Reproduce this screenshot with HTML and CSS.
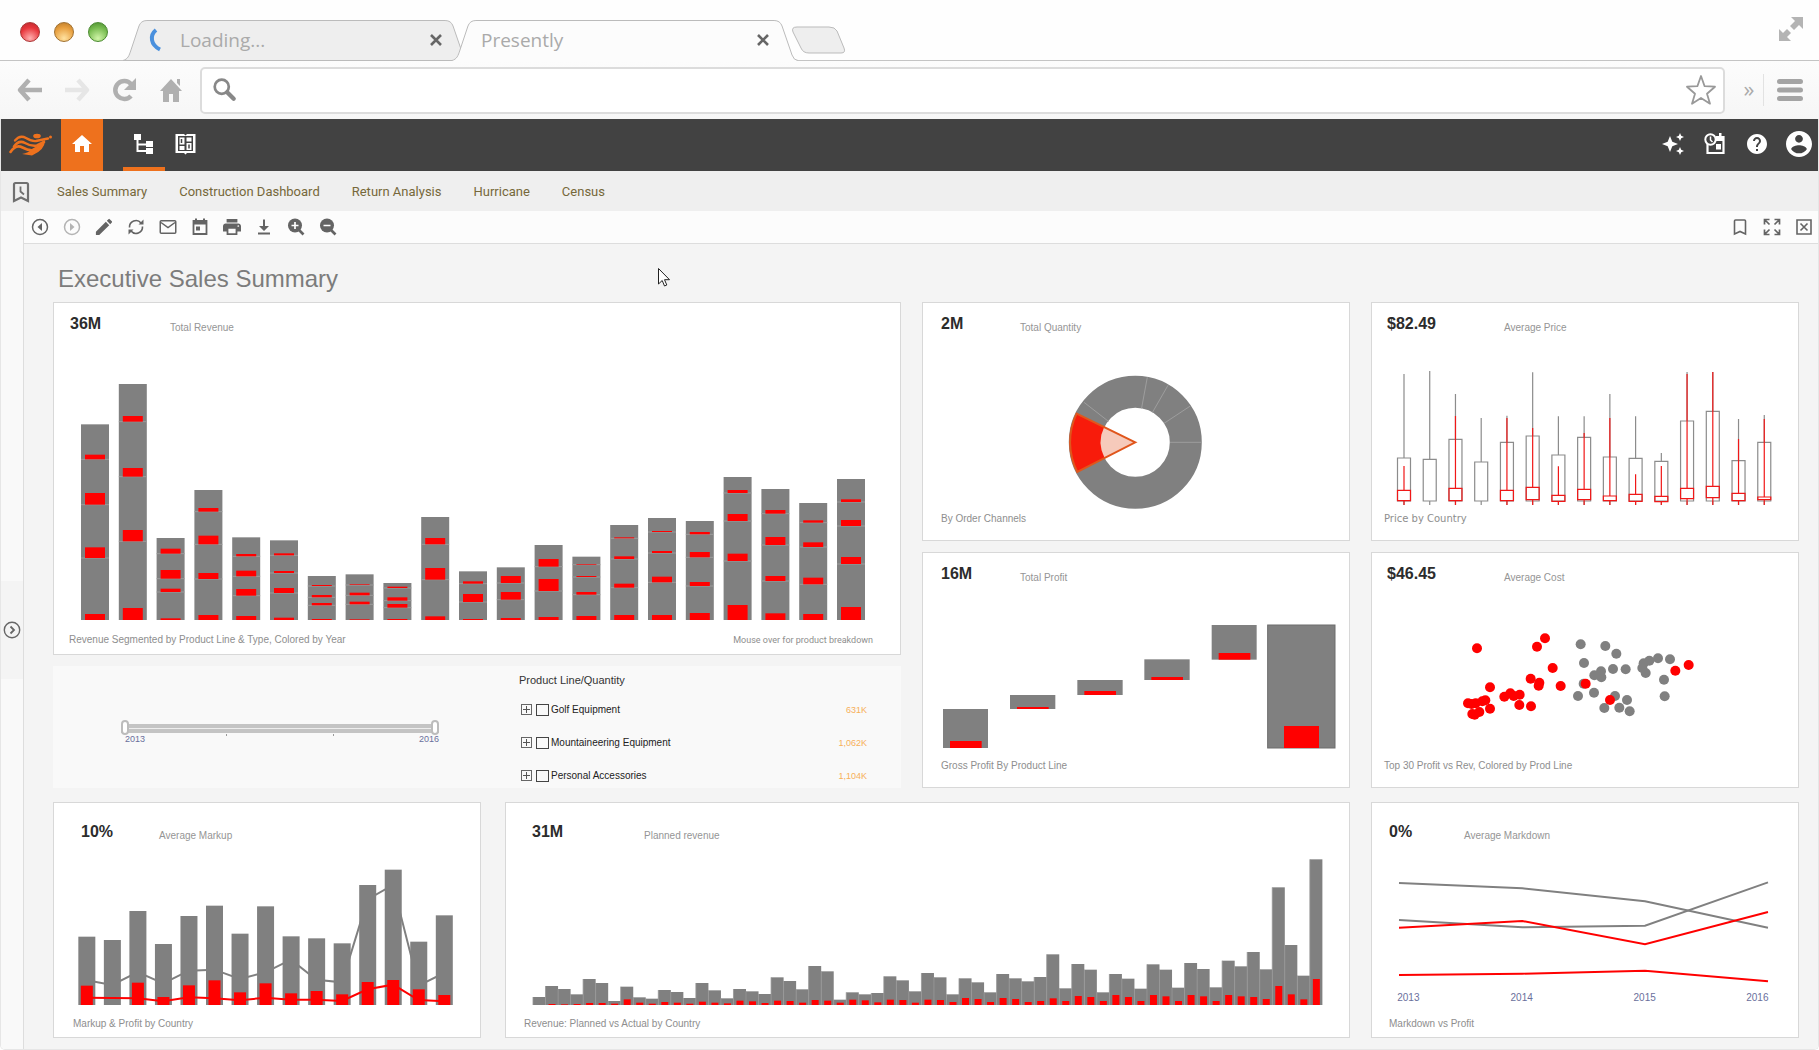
FILE: index.html
```html
<!DOCTYPE html>
<html lang="en">
<head>
<meta charset="utf-8">
<title>Executive Sales Summary</title>
<link rel="stylesheet" href="styles.css">
</head>
<body>
<header class="browser">
  <div class="titlebar">
    <div class="lights">
      <button class="light light-red" aria-label="Close window"></button>
      <button class="light light-amber" aria-label="Minimise window"></button>
      <button class="light light-green" aria-label="Zoom window"></button>
    </div>
    <div class="tab">
      <svg class="tab-shape" viewBox="0 0 347 41" preserveAspectRatio="none" aria-hidden="true"><path d="M0 40.5C5 39 6 36 8 30L16 6Q18 .5 24 .5H323Q329 .5 331 6L341 35Q343 40.5 347 40.5Z" fill="#eee" stroke="#bbb"/></svg>
      <svg class="spinner" viewBox="0 0 20 24" aria-hidden="true"><path d="M8 2Q3 6 4 12Q5 18 12 21.500" fill="none" stroke="#4a90dd" stroke-width="4"/></svg>
      <span class="tab-title">Loading...</span>
      <button class="tab-close" aria-label="Close tab"><svg viewBox="0 0 14 14"><path d="M2 2l10 10M12 2L2 12" stroke="#666" stroke-width="2.6"/></svg></button>
    </div>
    <div class="tab tab-active">
      <svg class="tab-shape" viewBox="0 0 347 41" preserveAspectRatio="none" aria-hidden="true"><path d="M0 40.5C5 39 6 36 8 30L16 6Q18 .5 24 .5H323Q329 .5 331 6L341 35Q343 40.5 347 40.5V41H0Z" fill="#fcfcfc"/><path d="M0 40.5C5 39 6 36 8 30L16 6Q18 .5 24 .5H323Q329 .5 331 6L341 35Q343 40.5 347 40.5" fill="none" stroke="#bbb"/></svg>
      <span class="tab-title">Presently</span>
      <button class="tab-close" aria-label="Close tab"><svg viewBox="0 0 14 14"><path d="M2 2l10 10M12 2L2 12" stroke="#666" stroke-width="2.6"/></svg></button>
    </div>
    <button class="new-tab" aria-label="New tab"><svg viewBox="0 0 56 28"><path d="M6 1H38Q44 1 46 5L53 22Q55 27 50 27H18Q12 27 10 22L2 6Q0 1 6 1Z" fill="#eee" stroke="#bbb"/></svg></button>
    <button class="expand" aria-label="Full screen"><svg viewBox="0 0 26 26"><path d="M13 1h12v12l-4-4-5 5-4-4 5-5zM13 25H1V13l4 4 4-4 4 4-4 4z" fill="#b4b4b4"/></svg></button>
  </div>
  <div class="navbar">
    <div class="nav-buttons">
      <button aria-label="Back"><svg viewBox="0 0 28 28"><path d="M13 4L4 14l9 10M5 14h21" fill="none" stroke="#b0b0b0" stroke-width="4.500" stroke-linejoin="round"/></svg></button>
      <button aria-label="Forward"><svg viewBox="0 0 28 28"><path d="M15 4l9 10-9 10M23 14H2" fill="none" stroke="#e6e6e6" stroke-width="4.500" stroke-linejoin="round"/></svg></button>
      <button aria-label="Reload"><svg viewBox="0 0 28 28"><path d="M21 20a9 9 0 1 1 0-12" fill="none" stroke="#b0b0b0" stroke-width="4.500"/><path d="M26 2v12H14z" fill="#b0b0b0"/></svg></button>
      <button aria-label="Home"><svg viewBox="0 0 28 28"><path d="M14 3l11 12h-3v11h-6v-8h-4v8H6V15H3zM20 3h3v7l-3-3z" fill="#b0b0b0"/></svg></button>
    </div>
    <form class="omnibox">
      <svg class="search-icon" viewBox="0 0 24 24" aria-hidden="true"><circle cx="9" cy="9" r="6.500" fill="none" stroke="#888" stroke-width="2.500"/><path d="M14 14l6 6" stroke="#888" stroke-width="4" stroke-linecap="round"/></svg>
      <input type="text" aria-label="Address">
      <button class="star" type="button" aria-label="Bookmark"><svg viewBox="0 0 32 32"><path d="M16 2l3.600 10.200 10.400.500-8 7 3 10-9-5.700-9 5.700 3-10-8-7 10.400-.500z" fill="#fff" stroke="#999" stroke-width="1.800" stroke-linejoin="round"/></svg></button>
    </form>
    <button class="more" aria-label="More">»</button>
    <button class="menu" aria-label="Menu"><svg viewBox="0 0 26 24"><path d="M2.500 3.500h21M2.500 12h21M2.500 20.500h21" stroke="#a4a4a4" stroke-width="5" stroke-linecap="round"/></svg></button>
  </div>
</header>

<div class="app">
  <nav class="topbar" aria-label="Main">
    <a class="logo" href="#" aria-label="Portal"><svg viewBox="0 0 44 24"><g fill="none" stroke="#ee711d" stroke-linecap="round"><path d="M6 7.500Q11 1.500 17 5T27 8L39 5.500" stroke-width="2.300"/><path d="M5 13.500Q10 6.500 16 10T28 12.500L35 9" stroke-width="2.600"/><path d="M1.500 19Q7 11 13.500 14.500T25 17" stroke-width="2.600"/></g><path d="M33 9L36 7Q36 17 23 22.500Q18 21.500 13 21Q20 19.500 22 16.500L29 12.500Z" fill="#ee711d"/><ellipse cx="28" cy="3" rx="3.800" ry="2.300" fill="#ee711d"/><circle cx="41.500" cy="4" r="1.500" fill="#ee711d"/></svg></a>
    <a class="top-item top-home" href="#" aria-label="Home"><svg viewBox="0 0 24 24"><path d="M10 20v-6h4v6h5v-8h3L12 3 2 12h3v8z" fill="#fff"/></svg></a>
    <a class="top-item top-current" href="#" aria-label="Repository"><svg viewBox="0 0 24 24"><path d="M2 2h7v6H6.500v3.500H14V9h7v6h-7v-1.500H6.500V18H14v-2h7v6h-7v-2H4.500V8H2z" fill="#fff"/></svg></a>
    <a class="top-item" href="#" aria-label="Catalogue"><svg viewBox="0 0 24 24"><path d="M1.500 2h8.500l1.500 1.500L13 2h8.500v19H13l-1.500 1.500L10 21H1.500z" fill="#fff"/><path d="M4 4h15v15H4z" fill="#424242"/><path d="M5.500 5.500h5v7h-5zM5.500 14h5v4h-5zM12.500 5.500h5v4h-5zM12.500 11h5v7h-5z" fill="#fff"/><path d="M7.500 7v4M15 12.500v4" stroke="#424242" stroke-width="1.500"/></svg></a>
    <span class="spacer"></span>
    <button class="top-item" aria-label="Assistant"><svg viewBox="0 0 24 24"><path d="M9 4l2.300 5.700L17 12l-5.700 2.300L9 20l-2.300-5.700L1 12l5.700-2.300zM19 1l1.200 2.800L23 5l-2.800 1.200L19 9l-1.200-2.800L15 5l2.800-1.200zM19 15l1.200 2.800L23 19l-2.800 1.200L19 23l-1.200-2.800L15 19l2.800-1.200z" fill="#fff"/></svg></button>
    <button class="top-item" aria-label="Schedule"><svg viewBox="0 0 24 24"><path d="M4.500 12v9h16V5h-7" fill="none" stroke="#fff" stroke-width="2.200"/><path d="M13 4h8v5h-8zM16 1h2.500v4H16zM13 12h5v5.500h-5z" fill="#fff"/><circle cx="7.500" cy="7.500" r="5.200" fill="#424242" stroke="#fff" stroke-width="2"/><path d="M7.500 4.500v3.500l2 2" fill="none" stroke="#fff" stroke-width="1.500"/></svg></button>
    <button class="top-item" aria-label="Help"><svg viewBox="0 0 24 24"><path d="M12 2C6.480 2 2 6.480 2 12s4.480 10 10 10 10-4.480 10-10S17.520 2 12 2zm1 17h-2v-2h2v2zm2.070-7.750l-.9.920C13.450 12.900 13 13.500 13 15h-2v-.5c0-1.100.45-2.100 1.170-2.830l1.240-1.260c.37-.36.59-.86.59-1.410 0-1.100-.9-2-2-2s-2 .9-2 2H8c0-2.210 1.790-4 4-4s4 1.790 4 4c0 .88-.36 1.680-.93 2.250z" fill="#fff"/></svg></button>
    <button class="top-item top-user" aria-label="Account"><svg viewBox="2 2 20 20"><path d="M12 2C6.480 2 2 6.480 2 12s4.480 10 10 10 10-4.480 10-10S17.520 2 12 2zm0 3c1.660 0 3 1.340 3 3s-1.340 3-3 3-3-1.340-3-3 1.340-3 3-3zm0 14.200c-2.500 0-4.710-1.280-6-3.220.03-1.990 4-3.080 6-3.080 1.990 0 5.970 1.090 6 3.080-1.290 1.940-3.500 3.220-6 3.220z" fill="#fff"/></svg></button>
  </nav>

  <nav class="bookmarks" aria-label="Dashboards">
    <svg class="history-icon" viewBox="0 0 18 22" aria-hidden="true"><path d="M2 20V3.500Q2 2 3.500 2h11Q16 2 16 3.500V20l-7-3.500z" fill="none" stroke="#707070" stroke-width="2.200"/><path d="M8.500 5.500v5l3.500 3" fill="none" stroke="#707070" stroke-width="1.800"/></svg>
    <a href="#">Sales Summary</a>
    <a href="#">Construction Dashboard</a>
    <a href="#">Return Analysis</a>
    <a href="#">Hurricane</a>
    <a href="#">Census</a>
  </nav>

  <div class="workspace">
    <aside class="rail">
      <button class="rail-toggle" aria-label="Open panel"><svg viewBox="0 0 18 18"><circle cx="9" cy="9" r="7.700" fill="none" stroke="#666" stroke-width="1.400"/><path d="M7.500 5.500L11 9l-3.500 3.500" fill="none" stroke="#666" stroke-width="1.800"/></svg></button>
    </aside>
    <main class="main">
      <div class="toolbar">
        <button aria-label="Previous"><svg viewBox="0 0 18 18"><circle cx="9" cy="9" r="7.500" fill="none" stroke="#646464" stroke-width="1.500"/><path d="M11 5v8L6.500 9z" fill="#646464"/></svg></button>
        <button aria-label="Next" disabled><svg viewBox="0 0 18 18"><circle cx="9" cy="9" r="7.500" fill="none" stroke="#b4b4b4" stroke-width="1.500"/><path d="M7 5v8l4.500-4z" fill="#b4b4b4"/></svg></button>
        <button aria-label="Edit"><svg viewBox="2 2 20 20"><path d="M3 17.250V21h3.750L17.810 9.940l-3.750-3.750L3 17.250zM20.710 7.040a1 1 0 0 0 0-1.410l-2.340-2.340a1 1 0 0 0-1.410 0l-1.830 1.830 3.750 3.750 1.830-1.830z" fill="#646464"/></svg></button>
        <button aria-label="Refresh"><svg viewBox="0 0 18 18"><path d="M2.500 9.500A6.500 6.500 0 0 1 14 5M15.500 8.500A6.500 6.500 0 0 1 4 13" fill="none" stroke="#646464" stroke-width="1.600"/><path d="M16.500 1.500v5h-5zM1.500 16.500v-5h5z" fill="#646464"/></svg></button>
        <button aria-label="Email"><svg viewBox="0 0 18 18"><rect x="1.250" y="2.750" width="15.500" height="12.500" rx="1" fill="none" stroke="#646464" stroke-width="1.500"/><path d="M2 4.500l7 5 7-5" fill="none" stroke="#646464" stroke-width="1.500"/></svg></button>
        <button aria-label="Schedule"><svg viewBox="0 0 18 18"><path d="M2.500 3h13v13h-13z" fill="none" stroke="#646464" stroke-width="1.800"/><path d="M2 2.500h14v4H2zM4 .5h2v3H4zM12 .5h2v3h-2zM5 8.500h4v4H5z" fill="#646464"/></svg></button>
        <button aria-label="Print"><svg viewBox="2 2 20 20"><path d="M19 8H5c-1.660 0-3 1.340-3 3v6h4v4h12v-4h4v-6c0-1.660-1.340-3-3-3zm-3 11H8v-5h8v5zm3-7c-.55 0-1-.45-1-1s.45-1 1-1 1 .45 1 1-.45 1-1 1zm-1-9H6v4h12V3z" fill="#646464"/></svg></button>
        <button aria-label="Export"><svg viewBox="0 0 18 18"><path d="M8 1.500h2V8h4l-5 5-5-5h4zM3 14.500h12v2H3z" fill="#646464"/></svg></button>
        <button aria-label="Zoom in"><svg viewBox="0 0 18 18"><circle cx="8" cy="7.500" r="7" fill="#646464"/><path d="M12 12l4.500 4.500" stroke="#646464" stroke-width="2.600"/><path d="M8 4v7M4.500 7.500h7" stroke="#fff" stroke-width="1.700"/></svg></button>
        <button aria-label="Zoom out"><svg viewBox="0 0 18 18"><circle cx="8" cy="7.500" r="7" fill="#646464"/><path d="M12 12l4.500 4.500" stroke="#646464" stroke-width="2.600"/><path d="M4.500 7.500h7" stroke="#fff" stroke-width="1.700"/></svg></button>
        <span class="spacer"></span>
        <button aria-label="Add bookmark"><svg viewBox="0 0 18 18"><path d="M3.500 16V3Q3.500 2 4.500 2h9Q14.500 2 14.500 3V16L9 13.500z" fill="none" stroke="#646464" stroke-width="1.600"/></svg></button>
        <button aria-label="Maximise"><svg viewBox="0 0 18 18"><path d="M1.500 6.500v-5h5M11.500 1.500h5v5M16.500 11.500v5h-5M6.500 16.500h-5v-5M2 2l4.500 4.500M16 2l-4.500 4.500M16 16l-4.500-4.500M2 16l4.500-4.500" fill="none" stroke="#646464" stroke-width="1.700"/></svg></button>
        <button aria-label="Close dashboard"><svg viewBox="0 0 18 18"><path d="M2 2h14v14H2zM5.500 5.500l7 7M12.500 5.500l-7 7" fill="none" stroke="#646464" stroke-width="1.600"/></svg></button>
      </div>

      <div class="board">
        <h1>Executive Sales Summary</h1>
        <svg class="pointer" viewBox="0 0 12 19" aria-hidden="true"><path d="M.5.500V16l3.700-3.500L6.500 18l2.300-1-2.300-5.300h5z" fill="#fff" stroke="#222"/></svg>

        <div class="upper">
          <div class="stack">
            <section class="card card-revenue">
              <div class="kpi"><strong>36M</strong><span>Total Revenue</span></div>
              <svg id="revenue" viewBox="0 0 846 297" role="img" aria-label="Revenue by product line and type"></svg>
              <p class="caption"><span>Revenue Segmented by Product Line &amp; Type, Colored by Year</span><span class="hint">Mouse over for product breakdown</span></p>
            </section>
            <section class="filters">
              <div class="years">
                <div class="range">
                  <input type="range" min="2013" max="2016" value="2013" aria-label="From year">
                  <input type="range" min="2013" max="2016" value="2016" aria-label="To year">
                </div>
                <div class="ticks"><i></i><i></i></div>
                <div class="range-labels"><span>2013</span><span>2016</span></div>
              </div>
              <div class="tree">
                <h2>Product Line/Quantity</h2>
                <ul>
                  <li><button class="twisty" aria-label="Expand Golf Equipment"></button><input type="checkbox" id="golf"><label for="golf">Golf Equipment</label><span class="qty">631K</span></li>
                  <li><button class="twisty" aria-label="Expand Mountaineering Equipment"></button><input type="checkbox" id="mountain"><label for="mountain">Mountaineering Equipment</label><span class="qty">1,062K</span></li>
                  <li><button class="twisty" aria-label="Expand Personal Accessories"></button><input type="checkbox" id="personal"><label for="personal">Personal Accessories</label><span class="qty">1,104K</span></li>
                </ul>
              </div>
            </section>
          </div>
          <div class="stack">
            <section class="card card-total">
              <div class="kpi"><strong>2M</strong><span>Total Quantity</span></div>
              <svg id="channels" viewBox="0 0 426 176" role="img" aria-label="Quantity by order channel"></svg>
              <p class="caption">By Order Channels</p>
            </section>
            <section class="card card-total">
              <div class="kpi"><strong>16M</strong><span>Total Profit</span></div>
              <svg id="profit" viewBox="0 0 426 173" role="img" aria-label="Gross profit by product line"></svg>
              <p class="caption">Gross Profit By Product Line</p>
            </section>
          </div>
          <div class="stack">
            <section class="card card-average">
              <div class="kpi"><strong>$82.49</strong><span>Average Price</span></div>
              <svg id="price" viewBox="0 0 426 176" role="img" aria-label="Price by country"></svg>
              <p class="caption caption-wide">Price by Country</p>
            </section>
            <section class="card card-average">
              <div class="kpi"><strong>$46.45</strong><span>Average Cost</span></div>
              <svg id="cost" viewBox="0 0 426 173" role="img" aria-label="Profit against revenue"></svg>
              <p class="caption">Top 30 Profit vs Rev, Colored by Prod Line</p>
            </section>
          </div>
        </div>

        <div class="lower">
          <div class="pair">
            <section class="card card-low card-markup">
              <div class="kpi"><strong>10%</strong><span>Average Markup</span></div>
              <svg id="markup" viewBox="0 0 426 173" role="img" aria-label="Markup and profit by country"></svg>
              <p class="caption">Markup &amp; Profit by Country</p>
            </section>
            <section class="card card-low card-planned">
              <div class="kpi"><strong>31M</strong><span>Planned revenue</span></div>
              <svg id="planned" viewBox="0 0 843 173" role="img" aria-label="Planned and actual revenue by country"></svg>
              <p class="caption">Revenue: Planned vs Actual by Country</p>
            </section>
          </div>
          <section class="card card-low card-markdown">
            <div class="kpi"><strong>0%</strong><span>Average Markdown</span></div>
            <svg id="markdown" viewBox="0 0 426 173" role="img" aria-label="Markdown and profit by year"></svg>
            <p class="caption">Markdown vs Profit</p>
          </section>
        </div>
      </div>
    </main>
  </div>
</div>
<script src="charts.js"></script>
</body>
</html>
```
FILE: styles.css
```css
* { box-sizing: border-box; }
body {
  margin: 0;
  min-height: 100vh;
  display: flex;
  flex-direction: column;
  background: #fff;
  font-family: "Liberation Sans", Arial, sans-serif;
}
button { padding: 0; border: 0; background: none; display: grid; place-items: center; flex: none; }
svg { display: block; }
h1, h2, p, ul { margin: 0; padding: 0; font-weight: normal; }
.spacer { flex: 1; }

/* Browser window */
.titlebar {
  display: flex;
  align-items: flex-end;
  height: 61px;
  border-bottom: 1px solid #c4c4c4;
  background: #fefefe;
}
.lights { display: flex; gap: 14px; padding: 0 15px 18px 20px; }
.light { width: 20px; height: 20px; border-radius: 50%; border: 1px solid #888; }
.light-red { border-color: #a33; background: radial-gradient(circle at 50% 85%, #ffb0b0, #e8363c 60%, #b8282e); }
.light-amber { border-color: #a07030; background: radial-gradient(circle at 50% 85%, #ffe2a0, #e8a040 60%, #b87828); }
.light-green { border-color: #4a8a30; background: radial-gradient(circle at 50% 85%, #d0f5a8, #78bc50 60%, #4a8a30); }
.tab {
  position: relative;
  display: flex;
  align-items: center;
  width: 346px;
  height: 41px;
  margin-bottom: -1px;
  padding: 0 26px 2px 25px;
}
.tab-active { margin-left: -17px; padding-left: 29px; padding-right: 28px; }
.tab-shape { position: absolute; inset: 0; width: 100%; height: 100%; }
.spinner { position: relative; width: 20px; height: 24px; margin-right: 12px; }
.tab-title { position: relative; flex: 1; font: 19px/24px "Open Sans", sans-serif; color: #aaa; }
.tab-close { position: relative; width: 14px; height: 14px; }
.tab-close svg { width: 14px; height: 14px; }
.new-tab { margin: 0 0 6px -7px; }
.new-tab svg { width: 56px; height: 28px; }
.expand { margin: 0 15px 18px auto; }
.expand svg { width: 26px; height: 26px; }

.navbar {
  display: flex;
  align-items: center;
  height: 58px;
  padding: 0 16px;
  background: linear-gradient(#fcfcfc, #f6f6f6);
}
.nav-buttons { display: flex; gap: 19px; width: 184px; }
.nav-buttons svg { width: 28px; height: 28px; }
.omnibox {
  flex: 1;
  display: flex;
  align-items: center;
  height: 47px;
  padding: 0 6px 0 10px;
  border: 2px solid #dcdcdc;
  border-radius: 5px;
  background: #fff;
}
.search-icon { width: 26px; height: 26px; }
.omnibox input { flex: 1; min-width: 0; border: 0; background: none; font-size: 18px; }
.star svg { width: 32px; height: 32px; }
.more { width: 39px; height: 32px; padding: 0 0 4px 10px; border-right: 1px solid #e2e2e2; color: #aaa; font: 22px/24px "Open Sans", sans-serif; }
.menu { margin-left: 13px; }
.menu svg { width: 26px; height: 24px; }

/* Application frame */
.app {
  flex: 1;
  display: flex;
  flex-direction: column;
  border: 1px solid #e6e6e6;
  border-top: 0;
  border-radius: 0 0 5px 5px;
  overflow: hidden;
}
.topbar { display: flex; height: 52px; background: #424242; }
.logo { width: 60px; padding: 14px 8px; }
.logo svg { width: 44px; height: 24px; }
.top-item { display: grid; place-items: center; width: 42px; height: 52px; padding-bottom: 2px; }
.top-item svg { width: 24px; height: 24px; }
.top-home { margin-right: 20px; background: #ee711d; }
.top-current { border-bottom: 4px solid #ee711d; padding: 4px 0 2px; }
.top-user { width: 40px; padding-left: 2px; }
.top-user svg { width: 26px; height: 26px; }

.bookmarks {
  display: flex;
  align-items: center;
  gap: 32px;
  height: 40px;
  padding: 1px 11px 0;
  background: #efefef;
}
.bookmarks a { font: 13px/20px Roboto, sans-serif; color: #76683a; text-decoration: none; }
.history-icon { width: 18px; height: 22px; margin-right: -5px; }

.workspace { flex: 1; display: flex; }
.rail { display: flex; align-items: center; width: 23px; background: #f9f9f9; border-right: 1px solid #ddd; }
.rail-toggle { width: 22px; height: 98px; background: #f4f4f4; }
.rail-toggle svg { width: 18px; height: 18px; }
.main { flex: 1; min-width: 0; display: flex; flex-direction: column; background: #f4f4f4; }
.toolbar {
  display: flex;
  align-items: center;
  gap: 14px;
  height: 33px;
  padding: 0 5px 0 7px;
  background: #fcfcfc;
  border-bottom: 1px solid #ddd;
}
.toolbar svg { width: 18px; height: 18px; }

/* Dashboard */
.board { position: relative; flex: 1; padding: 20px 19px 11px 29px; }
.board h1 { margin: 0 0 8px 5px; font-size: 24px; line-height: 30px; color: #7c7c7c; }
.pointer { position: absolute; left: 634px; top: 24px; width: 12px; height: 19px; }
.upper { display: grid; grid-template-columns: 848fr 428fr 428fr; gap: 21px; margin-bottom: 14px; }
.lower { display: grid; grid-template-columns: 1297fr 428fr; gap: 21px; }
.pair { display: grid; grid-template-columns: 428fr 845fr; gap: 24px; min-width: 0; }
.stack { display: flex; flex-direction: column; gap: 11px; min-width: 0; }

.card {
  --inset: 18px;
  --caption-inset: 18px;
  --value-width: 79px;
  min-width: 0;
  padding: 11px 0 12px;
  border: 1px solid #d8d8d8;
  background: #fff;
}
.card > svg { width: 100%; height: auto; }
.kpi { display: flex; height: 20px; padding-left: var(--inset); }
.kpi strong { width: var(--value-width); font-size: 16px; line-height: 20px; color: #2c2c2c; }
.kpi span { font-size: 10px; line-height: 28px; color: #959595; }
.caption {
  display: flex;
  justify-content: space-between;
  padding: 0 27px 0 var(--caption-inset);
  font-size: 10px;
  line-height: 18px;
  color: #8e8e8e;
}
.caption-wide { font-family: "DejaVu Sans", Verdana, sans-serif; }
.hint { font-family: Roboto, sans-serif; font-size: 9px; }
.card-revenue { --inset: 16px; --caption-inset: 15px; --value-width: 100px; padding-bottom: 5px; }
.card-average { --inset: 15px; --caption-inset: 12px; --value-width: 117px; }
.card-low { padding: 19px 0 4px; }
.card-markup { --inset: 27px; --caption-inset: 19px; --value-width: 78px; }
.card-planned { --inset: 26px; --value-width: 112px; }
.card-markdown { --inset: 17px; --caption-inset: 17px; --value-width: 75px; }
.bar, .dot { fill: #808080; }
.mark { fill: #f00; }
.line { fill: none; stroke: #808080; stroke-width: 2; }
.line-mark { fill: none; stroke: #f00; stroke-width: 2; }
.axis { font-size: 10px; fill: #6a6f9c; text-anchor: middle; }

/* Filters */
.filters { display: grid; grid-template-columns: 466fr 382fr; height: 122px; background: #f9f9f9; }
.years { padding: 54px 80px 0 68px; }
.range { display: grid; align-items: center; height: 15px; background: linear-gradient(#c4c4c4 4px, #eee 4px 5px, #c4c4c4 5px) 0 4px / 100% 9px no-repeat; }
.range input { grid-area: 1 / 1; width: 100%; height: 15px; margin: 0; appearance: none; background: none; pointer-events: none; }
.range input::-webkit-slider-thumb { appearance: none; width: 8px; height: 15px; border: 2px solid #bcbcbc; border-radius: 4px; background: #fff; pointer-events: auto; }
.ticks { display: flex; justify-content: space-evenly; height: 0; }
.ticks i { width: 1px; height: 2px; margin-top: -1px; background: #999; }
.range-labels { display: flex; justify-content: space-between; padding: 0 0 0 4px; font-size: 9px; line-height: 8px; color: #6a6f9c; }
.tree { padding-top: 6px; }
.tree h2 { font-size: 11px; line-height: 16px; color: #333; }
.tree ul { padding-top: 5px; list-style: none; }
.tree li { display: flex; align-items: center; height: 33px; padding: 0 34px 0 2px; }
.tree label { flex: 1; font-size: 10px; line-height: 14px; color: #222; }
.tree input { appearance: none; width: 13px; height: 12px; margin: 0 2px 0 4px; border: 1px solid #444; }
.twisty { width: 11px; height: 11px; border: 1px solid #666; background: linear-gradient(#555, #555) 50% / 7px 1px no-repeat, linear-gradient(#555, #555) 50% / 1px 7px no-repeat; }
.qty { font-size: 9px; line-height: 14px; color: #f7b05a; }
```
FILE: charts.js
```js
const NS = 'http://www.w3.org/2000/svg';

function add(parent, name, attrs, text) {
  const node = document.createElementNS(NS, name);
  for (const key in attrs) node.setAttribute(key, attrs[key]);
  if (text) node.textContent = text;
  parent.appendChild(node);
  return node;
}
function box(parent, cls, x, y, width, height) {
  return add(parent, 'rect', { class: cls, x, y, width, height });
}
const chart = id => document.getElementById(id);
const u = v => v / 3;

// Revenue: total, then [from, to] of each highlighted part
const revenue = [
  [587, [482, 496], [346, 381], [186, 218], [0, 18]],
  [708, [595, 612], [430, 456], [236, 270], [0, 36]],
  [246, [199, 214], [124, 150], [84, 94], [0, 5]],
  [390, [325, 336], [227, 253], [123, 141], [0, 15]],
  [248, [191, 198], [131, 148], [73, 93], [0, 12]],
  [239, [194, 200], [141, 147], [81, 96], [0, 7]],
  [132, [102, 105], [68, 75], [44, 51], [0, 3]],
  [137, [105, 107], [74, 82], [47, 55], [0, 2]],
  [111, [96, 100], [58, 68], [37, 48], [0, 3]],
  [309, [227, 246], [121, 156], [0, 11]],
  [146, [109, 116], [54, 78], [0, 3]],
  [158, [111, 132], [61, 84], [0, 6]],
  [225, [160, 183], [87, 123], [0, 9]],
  [190, [166, 168], [129, 132], [76, 84], [0, 12]],
  [285, [245, 248], [183, 191], [97, 109], [0, 15]],
  [306, [264, 267], [201, 207], [113, 130], [0, 15]],
  [297, [257, 264], [188, 204], [102, 114], [0, 21]],
  [429, [381, 390], [297, 318], [177, 199], [0, 45]],
  [393, [319, 330], [225, 249], [117, 132], [0, 20]],
  [351, [292, 299], [219, 233], [107, 127], [0, 18]],
  [423, [354, 362], [282, 300], [168, 189], [0, 39]]
];
revenue.forEach(([total, ...parts], i) => {
  const svg = chart('revenue'), x = 27 + i * 37.8, base = 286;
  box(svg, 'bar', x, base - u(total), 28, u(total));
  parts.forEach(([from, to]) => {
    if (from) add(svg, 'path', { d: `M${x} ${base - u(from)}h28`, stroke: '#9c9c9c' });
    box(svg, 'mark', x + 4, base - u(to), 20, u(to - from));
  });
});

// Order channels
(() => {
  const svg = chart('channels'), cx = 212.3, cy = 108.3;
  add(svg, 'circle', { cx, cy, r: 50.5, fill: 'none', stroke: '#808080', 'stroke-width': 32 });
  [[12, -65], [32.7, -57], [55, -36.3], [66.5, 0], [-51.3, -40]].forEach(([x, y]) =>
    add(svg, 'path', { d: `M${cx + x * 0.52} ${cy + y * 0.52}L${cx + x} ${cy + y}`, stroke: '#a4a4a4', 'stroke-width': 0.8 }));
  const wedge = (r, k, fill, stroke) => add(svg, 'path', {
    d: `M${cx} ${cy}L${cx - 58.7 * k} ${cy - 28.7 * k}A${r} ${r} 0 0 0 ${cx - 58 * k} ${cy + 29.7 * k}Z`,
    fill, stroke, 'stroke-width': 2
  });
  wedge(65.5, 1, '#f81b0b', 'none');
  wedge(34.5, 0.53, '#f6cabb', 'none');
  wedge(65.5, 1, 'none', '#e0561c');
})();

// Gross profit: x, top, width, bottom, highlight top
[
  [129, 510, 135, 627, 606], [330, 468, 136, 510, 504], [532, 423, 136, 468, 456],
  [733, 361, 136, 423, 414], [935, 258, 135, 362, 342], [1103, 258, 202, 627, 561]
].forEach(([x, top, w, bottom, mark], i) => {
  const svg = chart('profit'), total = i === 5, inset = total ? 49 : 21;
  const bar = box(svg, 'bar', u(x) - 23, u(top) - 45, u(w), u(bottom - top));
  if (total) bar.setAttribute('stroke', '#6c6c6c');
  box(svg, 'mark', u(x + inset) - 23, u(mark) - 45, u(total ? 105 : 95), u(bottom - mark));
});

// Price: whisker top, box top, then highlight whisker top, box top, box bottom
[
  [255, 507, 531, 604, 635], [246, 511], [315, 451, 381, 598, 635], [387, 519],
  [380, 460, 387, 604, 635], [250, 441, 417, 595, 632], [382, 498, 532, 619, 637],
  [382, 445, 432, 601, 632], [315, 504, 387, 621, 635], [382, 508, 556, 616, 637],
  [492, 517, 531, 622, 638], [249, 396, 255, 598, 629], [249, 367, 249, 592, 626],
  [390, 515, 450, 613, 635], [378, 460, 390, 624, 632]
].forEach(([top, boxTop, hTop, hBox, hBottom], i) => {
  const svg = chart('price'), x = u(132 + i * 77.2) - 12, y = v => u(v) - 45;
  const plot = (a, b, c, stroke) => add(svg, 'path', {
    d: `M${x} ${y(a)}V${y(b)}M${x - 6.5} ${y(b)}h13V${y(c)}h-13ZM${x} ${y(c)}V${y(648)}`,
    fill: 'none', stroke, 'stroke-width': 1.2
  });
  plot(top, boxTop, 636, '#8c8c8c');
  if (hTop) plot(hTop, hBox, hBottom, '#f01818');
});

// Cost scatter
const grayDots = [[662, 316], [736, 321], [769, 344], [672, 372], [723, 397], [703, 409], [724, 415], [759, 390], [797, 391], [671, 434], [654, 471], [702, 461], [765, 471], [733, 507], [778, 506], [801, 483], [809, 517], [847, 387], [851, 373], [857, 402], [868, 365], [894, 358], [930, 361], [912, 422], [914, 472]];
const redDots = [[351, 328], [555, 298], [531, 323], [578, 387], [602, 441], [512, 419], [538, 431], [536, 440], [390, 445], [324, 493], [347, 493], [367, 487], [376, 484], [390, 509], [337, 525], [344, 527], [358, 519], [335, 495], [433, 473], [451, 463], [461, 471], [479, 467], [478, 498], [513, 502], [677, 434], [750, 483], [946, 395], [986, 378]];
[['dot', grayDots], ['mark', redDots]].forEach(([cls, dots]) => dots.forEach(([x, y]) =>
  add(chart('cost'), 'circle', { class: cls, cx: u(x) - 12, cy: u(y) - 45, r: 5 })));

// Markup: bar height, highlight height, and the two lines
(() => {
  const svg = chart('markup'), base = 163, step = 76.6;
  const bars = [205, 195, 282, 183, 267, 298, 214, 296, 206, 200, 185, 360, 406, 190, 269];
  const marks = [58, 0, 67, 24, 59, 74, 38, 65, 35, 42, 32, 69, 75, 47, 30];
  const gray = [74, 60, 99, 65, 103, 106, 78, 98, 136, 76, 68, 317, 360, 58, 96];
  const red = [22, null, 20, 11, 23, 20, 14, 22, 16, 16, 12, 47, 61, 15, 11];
  const points = list => list.map((v, i) => v === null ? '' : `${u(260 + i * step) - 54},${base - u(v)}`).join(' ');
  add(svg, 'polyline', { class: 'line', points: points(gray) });
  bars.forEach((v, i) => {
    const x = u(235 + i * step) - 54;
    box(svg, 'bar', x, base - u(v), 17, u(v));
    if (marks[i]) box(svg, 'mark', x + 2.5, base - u(marks[i]), 12, u(marks[i]));
  });
  add(svg, 'polyline', { class: 'line-mark', points: points(red) });
})();

// Planned and actual revenue
(() => {
  const svg = chart('planned'), base = 163;
  const planned = [24, 57, 48, 32, 78, 66, 12, 55, 23, 19, 45, 39, 21, 66, 44, 20, 48, 41, 33, 83, 72, 47, 117, 101, 16, 38, 32, 36, 86, 74, 41, 96, 83, 32, 80, 68, 38, 93, 80, 71, 84, 152, 50, 123, 106, 38, 93, 79, 49, 122, 106, 52, 126, 108, 53, 133, 116, 159, 107, 353, 180, 88, 437];
  const actual = [0, 3, 2, 3, 6, 6, 4, 17, 7, 4, 9, 7, 4, 10, 7, 5, 13, 11, 6, 13, 12, 7, 15, 13, 7, 16, 14, 8, 16, 15, 7, 16, 15, 9, 21, 18, 9, 21, 18, 9, 12, 20, 12, 27, 24, 12, 30, 24, 12, 30, 26, 12, 30, 26, 12, 30, 26, 24, 18, 57, 32, 17, 78];
  planned.forEach((v, i) => {
    const x = 27 + i * 12.53;
    box(svg, 'bar', x, base - u(v), 12.53, u(v));
    add(svg, 'path', { d: `M${x} ${base}v${-u(v)}`, stroke: '#959595', 'stroke-width': 0.8 });
    box(svg, 'mark', x + 3, base - u(actual[i]), 7, u(actual[i]));
  });
})();

// Markdown and profit by year
(() => {
  const svg = chart('markdown'), xs = [117, 487, 855, 1224];
  [
    ['line', [282, 298, 337, 416]], ['line', [393, 415, 410, 280]],
    ['line-mark', [416, 396, 466, 369]], ['line-mark', [558, 554, 545, 577]]
  ].forEach(([cls, ys]) => add(svg, 'polyline', {
    class: cls, points: ys.map((y, i) => `${u(xs[i]) - 12},${u(y) - 53}`).join(' ')
  }));
  [145, 485, 854, 1192].forEach((x, i) =>
    add(svg, 'text', { class: 'axis', x: u(x) - 12, y: 159 }, String(2013 + i)));
})();
```
